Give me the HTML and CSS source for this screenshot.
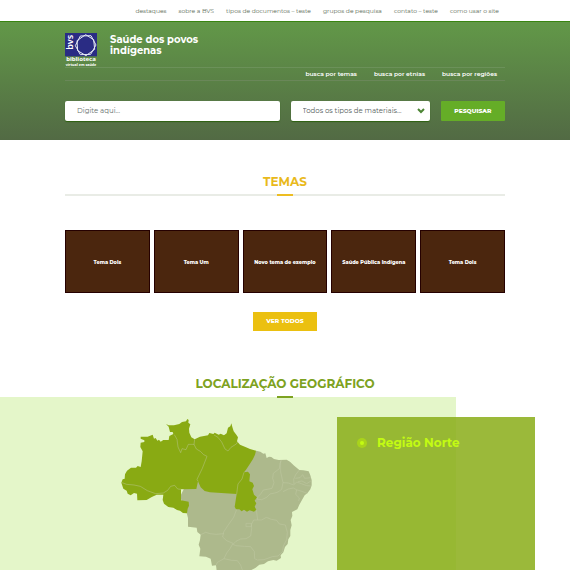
FILE: index.html
```html
<!DOCTYPE html>
<html lang="pt-BR">
<head>
<meta charset="utf-8">
<meta name="viewport" content="width=device-width, initial-scale=1">
<title>Saúde dos povos indígenas</title>
<link rel="stylesheet" href="styles.css">
</head>
<body>
<nav class="topbar wrap" aria-label="Principal">
  <a href="#">destaques</a>
  <a href="#">sobre a BVS</a>
  <a href="#">tipos de documentos – teste</a>
  <a href="#">grupos de pesquisa</a>
  <a href="#">contato – teste</a>
  <a href="#">como usar o site</a>
</nav>

<header class="header">
  <div class="wrap">
    <div class="brand">
      <a class="logo" href="#" aria-label="BVS biblioteca virtual em saúde">
        <svg viewBox="0 0 96 102">
          <rect width="96" height="70" fill="#2a2c84"/>
          <text class="logo-bvs" transform="translate(24 50) rotate(-90)">bvs</text>
          <g fill="none" stroke="#e4e8f4" stroke-width="3">
            <path d="M46 9 78 8 93 36 77 64 46 65 31 38Z"/>
            <path d="M62 5 86 20 89 49 63 68 38 53 36 23Z"/>
          </g>
          <text class="logo-name" x="48" y="85">biblioteca</text>
          <text class="logo-sub" x="48" y="99">virtual em saúde</text>
        </svg>
      </a>
      <h1 class="title">Saúde dos povos<br>indígenas</h1>
    </div>
    <nav class="subnav" aria-label="Busca">
      <a href="#">busca por temas</a>
      <a href="#">busca por etnias</a>
      <a href="#">busca por regiões</a>
    </nav>
    <form class="search">
      <input class="field" type="text" placeholder="Digite aqui..." aria-label="Buscar">
      <div class="select">
        <select class="field" aria-label="Tipo de material"><option>Todos os tipos de materiais...</option></select>
        <svg class="chevron" viewBox="0 0 8 6"><path d="M1 1 4 4 7 1"/></svg>
      </div>
      <button class="submit" type="submit">PESQUISAR</button>
    </form>
  </div>
</header>

<section class="themes wrap">
  <h2 class="heading heading-themes">TEMAS</h2>
  <div class="cards">
    <a class="card" href="#">Tema Dois</a>
    <a class="card" href="#">Tema Um</a>
    <a class="card" href="#">Novo tema de exemplo</a>
    <a class="card" href="#">Saúde Pública Indígena</a>
    <a class="card" href="#">Tema Dois</a>
  </div>
  <a class="more" href="#">VER TODOS</a>
</section>

<section class="location">
  <h2 class="heading heading-location">LOCALIZAÇÃO GEOGRÁFICO</h2>
  <div class="regions">
    <div class="map">
      <svg viewBox="0 0 630 640" role="img" aria-label="Mapa do Brasil">
        <path fill="#adb98c" d="M438 122 451 125 460 131 466 130 470 144 477 140 484 141 492 147 506 150 530 149 540 155 551 166 568 180 580 181 596 184 601 196 605 210 605 226 601 238 592 250 584 256 576 270 568 284 562 298 546 306 547 318 542 330 545 346 541 360 541 378 535 388 533 402 525 411 520 427 512 436 513 444 500 452 490 450 474 454 462 462 448 464 436 474 424 480 418 490 416 530 380 580 330 620 250 580 320 500 320 482 318 466 306 467 302 446 288 440 268 439 271 416 266 404 270 390 272 374 262 366 260 353 234 350 234 324 230 308 210 260 230 220 400 160Z"/>
        <path fill="#89aa13" d="M92 80 113 80 128 74 132 86 137 84 142 92 147 89 152 95 160 90 176 90 178 78 190 72 188 66 180 66 176 50 168 42 176 46 192 46 208 42 216 36 228 34 232 27 236 30 235 38 241 43 237 56 238 68 244 82 254 88 270 80 294 76 298 69 310 72 314 68 326 74 332 71 342 76 350 70 354 53 361 49 364 40 367 51 371 64 379 74 384 82 381 94 390 104 408 112 420 117 438 122 435 134 429 147 419 163 408 179 402 187 414 185 420 193 418 214 428 218 432 228 427 238 432 254 441 262 434 272 439 280 434 290 439 299 432 305 419 301 411 305 402 299 395 304 388 298 378 298 374 290 380 252 300 247 284 243 272 232 264 214 259 237 213 238 213 271 236 275 237 287 233 296 231 310 219 309 210 302 201 300 190 293 175 291 162 281 158 270 160 254 140 254 124 262 110 270 82 271 81 251 72 249 62 256 53 251 50 242 40 236 34 218 38 208 44 206 45 193 51 182 63 173 78 173 83 168 92 171 95 154 98 124 91 111 92 98 103 96 103 91 92 86Z"/>
        <g class="borders">
          <path d="M36 218 50 223 72 225 91 229 112 242 137 251 160 249 173 241 182 229 194 226 203 237 213 238M193 74 201 88 204 111 212 128 216 116 228 119 235 103 253 103M254 88 252 103 259 117 271 124 281 134 291 139 277 175 261 208 264 214M312 75 324 82 335 96 345 117 354 123 363 112 379 102 384 94"/>
          <path d="M402 187 396 207 384 222 380 252M514 151 510 160 508 176 490 190 488 205 492 218 486 235 472 238 460 240 452 252 444 260 442 268 455 269 470 262 480 252 494 249 504 246 515 238 519 218 512 186 512 151M519 218 535 219 551 225 560 216 574 221 590 227 605 228M568 180 557 194 551 208 552 222M556 205 570 203 578 194 584 205 603 203M564 215 576 213 590 221 603 213M519 245 535 237 550 234 559 239 575 244 592 250M560 240 557 253 568 264 566 273"/>
          <path d="M439 299 443 330 431 330 424 344 425 355 422 378 408 386 392 387 378 394 369 403 377 407 403 409 422 410 433 425 434 446 442 450 462 449 487 440 504 438 518 424 520 408 530 389 532 367 526 345 508 342 500 331 484 328 469 322 455 330 443 330M408 340 424 340 424 350 408 350ZM380 298 371 322 354 346 341 366 338 381 350 392 369 400 360 416 350 429 342 446 322 457 318 466M272 374 287 367 300 371 318 373 341 371M342 446 365 451 382 452 392 465 397 480"/>
        </g>
      </svg>
    </div>
    <aside class="panel">
      <h3 class="region"><svg class="dot" viewBox="0 0 10 10"><circle cx="5" cy="5" r="5" fill="#a9d31b"/><circle cx="5" cy="5" r="2" fill="#c3fb12"/></svg>Região Norte</h3>
    </aside>
  </div>
</section>
</body>
</html>
```
FILE: styles.css
```css
* { box-sizing: border-box; }
body {
  margin: 0;
  min-height: 100vh;
  display: flex;
  flex-direction: column;
  font-family: Montserrat, Inter, "Liberation Sans", sans-serif;
  background: #fff;
}
a { color: inherit; text-decoration: none; }
h1, h2, h3 { margin: 0; }
.wrap { width: calc(100% - 130px); margin: 0 auto; }

.topbar {
  height: 21px;
  display: flex;
  align-items: center;
  justify-content: flex-end;
  gap: 12px;
  padding-right: 6px;
  font-size: 6px;
  color: #5c6c57;
  white-space: nowrap;
}

.header {
  height: 119px;
  border-top: 1px solid #398511;
  background: linear-gradient(#629848, #526a44);
  color: #fff;
}
.brand { display: flex; gap: 13px; height: 45px; padding-top: 11px; }
.logo { width: 32px; }
.logo svg { display: block; width: 100%; overflow: visible; }
.logo text { fill: #fff; font-family: "Noto Sans", sans-serif; }
.logo .logo-bvs { font-size: 27px; font-weight: 600; }
.logo .logo-name { font-size: 18px; font-weight: 700; text-anchor: middle; }
.logo .logo-sub { font-size: 11px; font-weight: 700; text-anchor: middle; }
.title { padding-top: 1px; font-size: 10px; line-height: 11px; font-weight: 700; }
.subnav {
  height: 14px;
  display: flex;
  align-items: center;
  justify-content: flex-end;
  gap: 17px;
  padding-right: 8px;
  border-top: 1px solid #6b9159;
  border-bottom: 1px solid #6a8759;
  font-size: 6px;
  font-weight: 600;
}

.search {
  display: grid;
  grid-template-columns: 214fr 139fr 64fr;
  gap: 11px;
  margin: 20px 0 0;
}
.field {
  display: block;
  width: 100%;
  height: 20px;
  padding: 0 12px;
  border: 0;
  border-radius: 2px;
  background: #fff;
  box-shadow: 0 1px 1px #2d6110;
  color: #56615b;
  font: 7px/20px Montserrat, Inter, sans-serif;
  appearance: none;
}
.field::placeholder { color: #66716c; opacity: 1; }
.select { position: relative; }
.chevron {
  position: absolute;
  top: 7px;
  right: 5px;
  width: 8px;
  height: 6px;
  fill: none;
  stroke: #4c8534;
  stroke-width: 2;
}
.submit {
  height: 20px;
  padding: 0;
  border: 0;
  border-radius: 1px;
  background: #65ad27;
  color: #fff;
  font: 800 6px/20px Montserrat, Inter, sans-serif;
}

.heading { text-align: center; font-size: 12px; line-height: 16px; font-weight: 700; }
.heading::after { content: ""; display: block; width: 16px; height: 2px; margin: 0 auto; }
.themes { padding-top: 34px; text-align: center; }
.heading-themes { color: #e9b91b; }
.heading-themes::after {
  width: 100%;
  margin-top: 4px;
  background: linear-gradient(#edbd22, #edbd22) center / 16px 2px no-repeat, #e9ece6;
}
.cards { display: grid; grid-template-columns: repeat(5, 1fr); gap: 4px; margin-top: 34px; }
.card {
  height: 63px;
  display: flex;
  align-items: center;
  justify-content: center;
  border: 1px solid #250000;
  background: #4b260e;
  color: #fff;
  font-size: 5px;
  font-weight: 800;
  white-space: nowrap;
}
.more {
  display: block;
  width: 64px;
  margin: 19px auto 0;
  background: #ebc010;
  color: #fff;
  font-size: 6px;
  line-height: 19px;
  font-weight: 800;
}

.location { flex: 1; display: flex; flex-direction: column; padding-top: 45px; }
.heading-location { color: #7da221; }
.heading-location::after { position: relative; margin-top: 4px; background: #7da221; }
.regions {
  flex: 1;
  display: grid;
  grid-template-columns: 337fr 198fr 35fr;
  margin-top: -1px;
  background: linear-gradient(#e4f6c9, #e4f6c9) 0 0 / 80% 100% no-repeat;
}
.map { height: 173px; overflow: hidden; padding: 13px 0 0 110px; }
.map svg { display: block; width: 210px; }
.borders { fill: none; stroke: #c5cda9; stroke-opacity: .6; stroke-width: 2; stroke-linejoin: round; }
.panel { margin-top: 20px; padding: 18px 20px; background: rgba(139, 173, 26, .86); }
.region {
  display: flex;
  align-items: center;
  gap: 10px;
  color: #c3fb12;
  font-size: 12px;
  line-height: 16px;
  font-weight: 700;
  white-space: nowrap;
}
.dot { width: 10px; height: 10px; }
```
